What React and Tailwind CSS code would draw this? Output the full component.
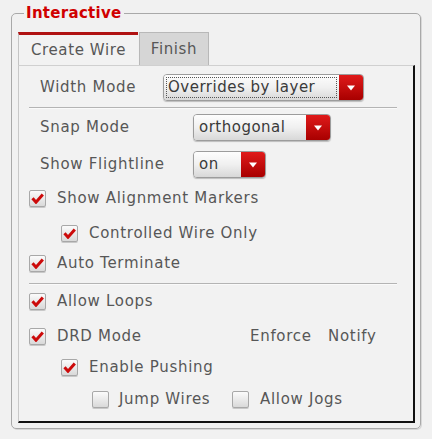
import React from "react";

const font = { fontFamily: '"DejaVu Sans", sans-serif' };

function Check({ checked }) {
  return (
    <span className="flex h-[17px] w-[17px] shrink-0 items-center justify-center rounded-[2px] border border-[#a8a8a8] bg-gradient-to-b from-[#fbfbfb] to-[#d9d9d9] shadow-[0_1px_0_#c8c8c8]">
      {checked && (
        <svg width="13" height="11" viewBox="0 0 13 11">
          <path d="M1.5 5.2 L5 9.2 L11.8 1.5" fill="none" stroke="#cc0a0a" strokeWidth="3" strokeLinejoin="miter" />
        </svg>
      )}
    </span>
  );
}

function CheckRow({ checked, label, ml, mt, gap = "gap-[11px]" }) {
  return (
    <div className={`flex h-[20px] items-center ${gap}`} style={{ marginLeft: ml, marginTop: mt }}>
      <Check checked={checked} />
      <span className="whitespace-nowrap text-[15px] leading-none tracking-[0.7px] text-[#575757]">{label}</span>
    </div>
  );
}

function Combo({ value, width, focus }) {
  return (
    <div className="flex h-[27px] shrink-0 overflow-hidden rounded-[4px] border border-[#9c9c9c] shadow-[0_1px_1px_#bdbdbd]" style={{ width }}>
      <div className="flex flex-1 items-center bg-gradient-to-b from-[#fdfdfd] via-[#f0f0f0] to-[#d8d8d8] p-[2px]">
        <div className={`flex h-full w-full items-center pl-[1px] text-[15px] leading-none tracking-[0.5px] text-[#3a3a3a] ${focus ? "border border-dotted border-[#555]" : "pl-[3px]"}`}>
          {value}
        </div>
      </div>
      <div className="flex w-[24px] items-center justify-center bg-gradient-to-b from-[#e01a1a] to-[#a80000]">
        <svg width="8" height="6" viewBox="0 0 8 6">
          <path d="M0 0.5 H8 L4 5.5 Z" fill="#fff" />
        </svg>
      </div>
    </div>
  );
}

export default function App() {
  return (
    <div className="h-[439px] w-[432px] bg-[#f1f1f1] pl-[11px] pt-[5px]" style={font}>
      <fieldset className="h-[424px] w-[410px] rounded-[5px] border border-[#a9a9a9] pb-[5px] pl-[6px] pr-[5px] pt-[10px] shadow-[1px_1px_0_#d8d8d8]">
        <legend className="ml-[6px] px-[2px] text-[15px] font-bold leading-[17px] tracking-[0.3px] text-[#d00000]">Interactive</legend>
        <div className="flex h-full flex-col">
          <div className="flex items-end">
            <div className="flex h-[33px] w-[120px] items-center justify-center border-l border-t-[3px] border-l-[#c4c4c4] border-t-[#b01212] bg-[#f2f2f2] text-[15px] tracking-[0.6px] text-[#575757]">
              Create Wire
            </div>
            <div className="ml-[1px] flex h-[33px] w-[70px] items-center justify-center border border-b-0 border-[#b8b8b8] bg-[#d6d6d6] text-[15px] tracking-[0.6px] text-[#575757]">
              Finish
            </div>
          </div>
          <div className="flex flex-1 flex-col border-b-2 border-l border-r-2 border-t border-b-[#111] border-l-[#c8c8c8] border-r-[#111] border-t-[#d0d0d0] bg-[#f2f2f2]">
            <div className="mt-[8px] flex h-[27px] items-center pl-[21px]">
              <span className="w-[123px] text-[15px] tracking-[0.7px] text-[#575757]">Width Mode</span>
              <Combo value="Overrides by layer" width={201} focus />
            </div>
            <div className="ml-[10px] mr-[16px] mt-[6px] h-[2px] border-t border-b border-t-[#b4b4b4] border-b-[#fafafa]" />
            <div className="mt-[5px] flex h-[27px] items-center pl-[21px]">
              <span className="w-[153px] text-[15px] tracking-[0.7px] text-[#575757]">Snap Mode</span>
              <Combo value="orthogonal" width={138} />
            </div>
            <div className="mt-[10px] flex h-[27px] items-center pl-[21px]">
              <span className="w-[153px] text-[15px] tracking-[0.7px] text-[#575757]">Show Flightline</span>
              <Combo value="on" width={73} />
            </div>
            <CheckRow checked label="Show Alignment Markers" ml={10} mt={10} />
            <CheckRow checked label="Controlled Wire Only" ml={42} mt={15} />
            <CheckRow checked label="Auto Terminate" ml={10} mt={10} />
            <div className="ml-[10px] mr-[16px] mt-[10px] h-[2px] border-t border-b border-t-[#b4b4b4] border-b-[#fafafa]" />
            <CheckRow checked label="Allow Loops" ml={10} mt={6} />
            <div className="ml-[10px] mt-[15px] flex h-[20px] items-center text-[15px] leading-none tracking-[0.7px] text-[#575757]">
              <Check checked />
              <span className="ml-[11px] w-[193px]">DRD Mode</span>
              <span className="w-[78px]">Enforce</span>
              <span>Notify</span>
            </div>
            <CheckRow checked label="Enable Pushing" ml={42} mt={11} />
            <div className="ml-[73px] mt-[12px] flex h-[20px] items-center text-[15px] leading-none tracking-[0.7px] text-[#575757]">
              <div className="flex w-[140px] items-center gap-[10px]">
                <Check />
                <span>Jump Wires</span>
              </div>
              <div className="flex items-center gap-[11px]">
                <Check />
                <span>Allow Jogs</span>
              </div>
            </div>
          </div>
        </div>
      </fieldset>
    </div>
  );
}
